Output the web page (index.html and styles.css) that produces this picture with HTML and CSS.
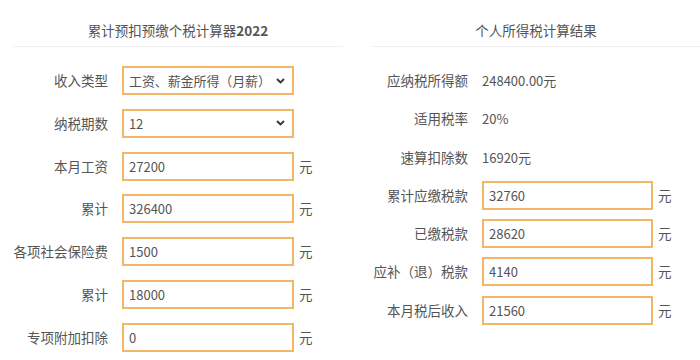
FILE: index.html
```html
<!DOCTYPE html>
<html lang="zh-CN">
<head>
<meta charset="utf-8">
<title>累计预扣预缴个税计算器2022</title>
<link rel="stylesheet" href="styles.css">
</head>
<body>
<div class="page">
  <section class="panel panel-left">
    <h2 class="panel-title">累计预扣预缴个税计算器<span class="year">2022</span></h2>
    <div class="form form-left">
      <label class="label">收入类型</label>
      <div class="box select-box"><span class="box-text">工资、薪金所得（月薪）</span><svg class="chev" width="9" height="6" viewBox="0 0 9 6"><path d="M1 1 L4.5 4.5 L8 1" fill="none" stroke="#333" stroke-width="1.8"/></svg></div>
      <span class="unit"></span>

      <label class="label">纳税期数</label>
      <div class="box select-box"><span class="box-text">12</span><svg class="chev" width="9" height="6" viewBox="0 0 9 6"><path d="M1 1 L4.5 4.5 L8 1" fill="none" stroke="#333" stroke-width="1.8"/></svg></div>
      <span class="unit"></span>

      <label class="label">本月工资</label>
      <div class="box"><span class="box-text">27200</span></div>
      <span class="unit">元</span>

      <label class="label">累计</label>
      <div class="box"><span class="box-text">326400</span></div>
      <span class="unit">元</span>

      <label class="label">各项社会保险费</label>
      <div class="box"><span class="box-text">1500</span></div>
      <span class="unit">元</span>

      <label class="label">累计</label>
      <div class="box"><span class="box-text">18000</span></div>
      <span class="unit">元</span>

      <label class="label">专项附加扣除</label>
      <div class="box"><span class="box-text">0</span></div>
      <span class="unit">元</span>
    </div>
  </section>

  <section class="panel panel-right">
    <h2 class="panel-title">个人所得税计算结果</h2>
    <div class="form form-right">
      <label class="label">应纳税所得额</label>
      <div class="plain">248400.00元</div>
      <span class="unit"></span>

      <label class="label">适用税率</label>
      <div class="plain">20%</div>
      <span class="unit"></span>

      <label class="label">速算扣除数</label>
      <div class="plain">16920元</div>
      <span class="unit"></span>

      <label class="label">累计应缴税款</label>
      <div class="box"><span class="box-text">32760</span></div>
      <span class="unit">元</span>

      <label class="label">已缴税款</label>
      <div class="box"><span class="box-text">28620</span></div>
      <span class="unit">元</span>

      <label class="label">应补（退）税款</label>
      <div class="box"><span class="box-text">4140</span></div>
      <span class="unit">元</span>

      <label class="label">本月税后收入</label>
      <div class="box"><span class="box-text">21560</span></div>
      <span class="unit">元</span>
    </div>
  </section>
</div>
</body>
</html>
```
FILE: styles.css
```css
html, body {
  margin: 0;
  padding: 0;
  background: #fff;
  overflow: hidden;
}
body {
  font-family: "Noto Sans CJK SC", "Noto Sans", sans-serif;
  color: #555;
  width: 700px;
  height: 360px;
}
.page {
  display: flex;
  width: 700px;
}
.panel {
  width: 330px;
  flex: none;
}
.panel-left {
  margin-left: 13px;
}
.panel-right {
  margin-left: 29px;
  width: 328px;
}
.panel-title {
  margin: 0;
  padding: 20px 0 6px;
  line-height: 20px;
  font-size: 13.5px;
  font-weight: normal;
  text-align: center;
  color: #555;
  border-bottom: 1px solid #f0f0f0;
}
.year {
  font-weight: bold;
}
.form {
  display: grid;
  grid-template-columns: 95px 172px 20px;
  column-gap: 14px;
  margin-top: 19px;
  align-items: center;
}
.form-left {
  row-gap: 13.8px;
}
.form-right {
  grid-template-columns: 96px 171px 20px;
  row-gap: 9.3px;
}
.form .unit {
  margin-left: -9px;
}
.label {
  font-size: 13.5px;
  text-align: right;
  white-space: nowrap;
  line-height: 29px;
  color: #555;
}
.box {
  position: relative;
  box-sizing: border-box;
  height: 29px;
  border: 2px solid #f3b566;
  padding-left: 5px;
  display: flex;
  align-items: center;
  background: #fff;
}
.box-text {
  font-size: 13px;
  color: #555;
  white-space: nowrap;
}
.select-box .box-text {
  font-size: 13px;
  letter-spacing: -0.1px;
}
.chev {
  position: absolute;
  right: 7px;
  top: 50%;
  margin-top: -3px;
}
.plain {
  font-size: 13px;
  line-height: 29px;
  color: #555;
  height: 29px;
}
.unit {
  font-size: 13.5px;
  color: #555;
  line-height: 29px;
}
```
